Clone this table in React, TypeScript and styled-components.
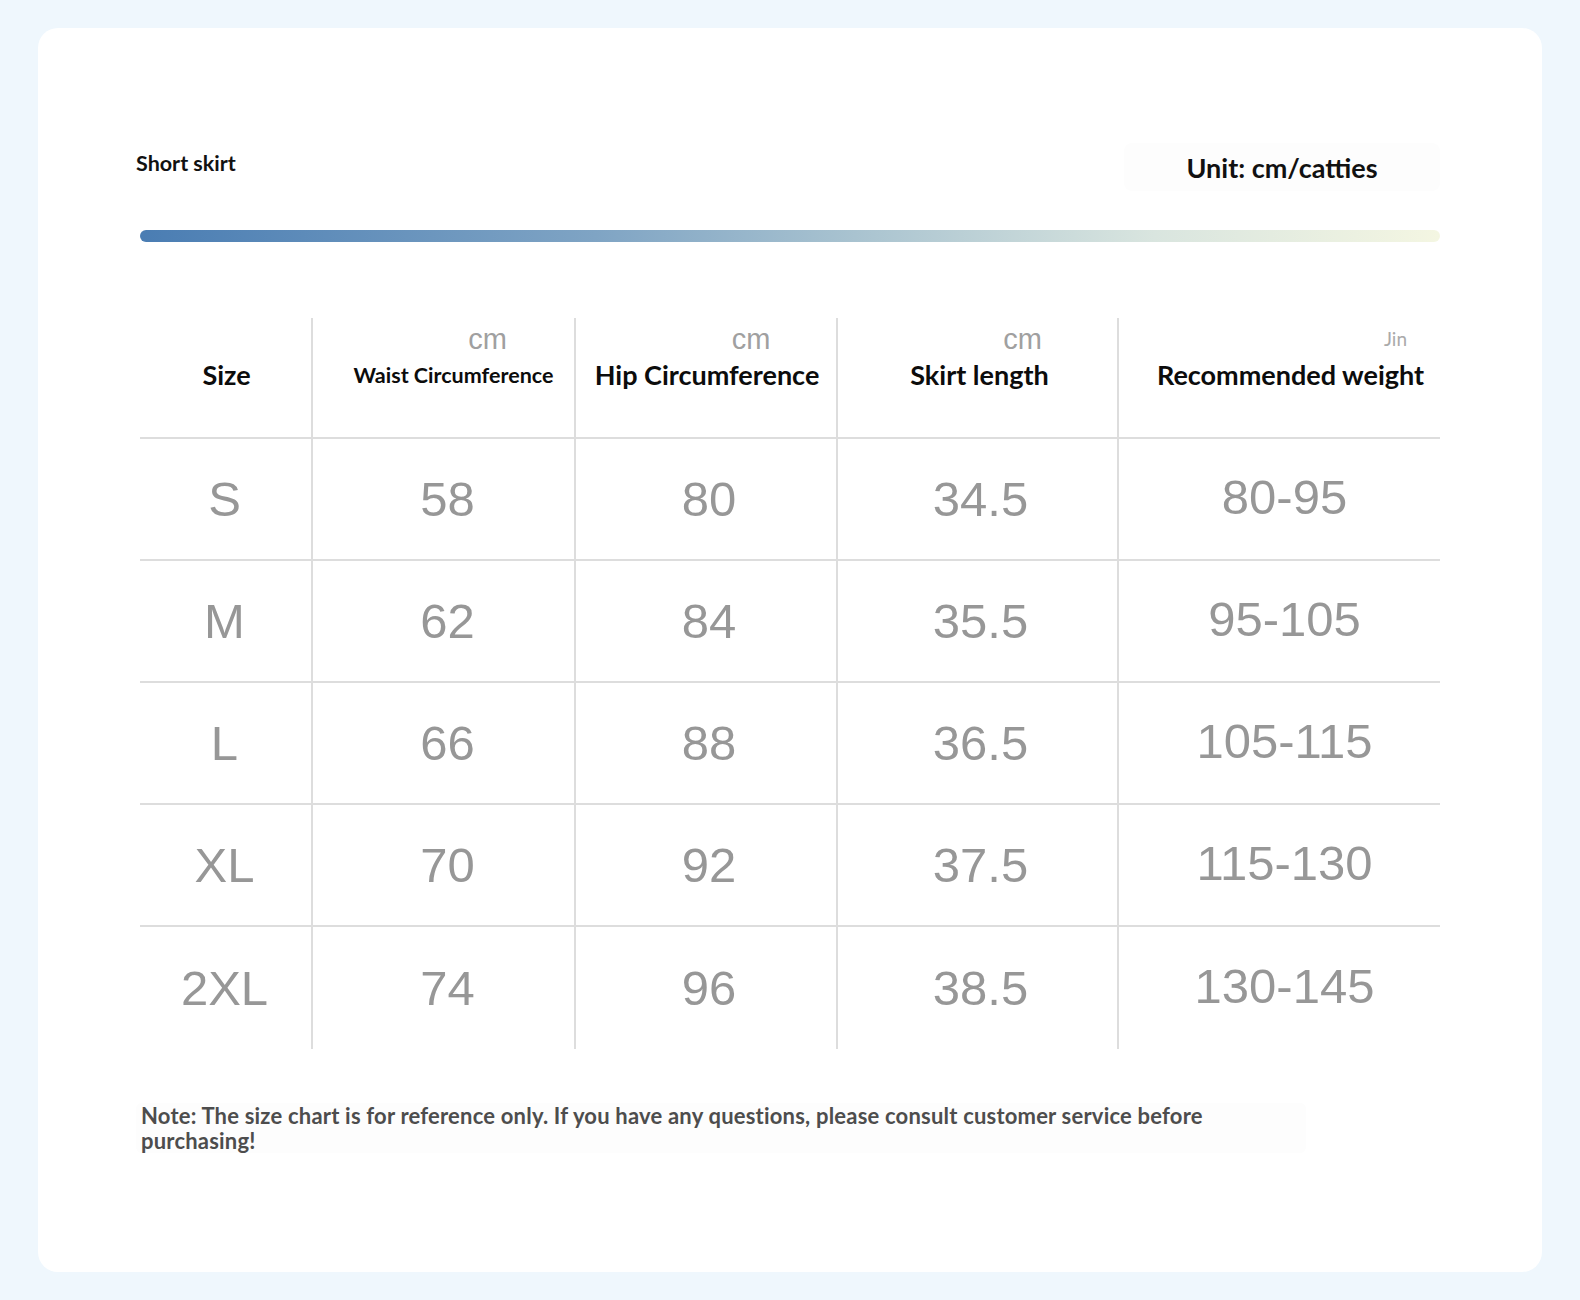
import styled, { createGlobalStyle } from "styled-components";

const GlobalStyle = createGlobalStyle`
  html, body {
    margin: 0;
    padding: 0;
    background: #eff7fd;
  }
  * { box-sizing: border-box; }
`

const LATO = `Lato, "Open Sans", "DejaVu Sans", sans-serif`
const ARIAL = `"Liberation Sans", Arial, sans-serif`
const LINE = '#dddddd'

const Page = styled.div`
  width: 1580px;
  height: 1300px;
  padding: 28px 38px;
`

const Card = styled.div`
  background: #ffffff;
  border-radius: 20px;
  height: 1244px;
  padding: 115px 102px 0 102px;
  display: flex;
  flex-direction: column;
`

const TitleRow = styled.div`
  display: flex;
  justify-content: space-between;
  align-items: center;
  height: 48px;
`

const SubTitle = styled.div`
  font-family: ${LATO};
  font-weight: 700;
  font-size: 21.5px;
  color: #111;
  margin-left: -4px;
  padding-bottom: 8px;
`

const UnitBox = styled.div`
  width: 316px;
  height: 48px;
  display: grid;
  place-items: center;
  border-radius: 8px;
  background: #fdfdfd;
  font-family: ${LATO};
  font-weight: 700;
  font-size: 27px;
  color: #111;
`

const GradientBar = styled.div`
  margin-top: 39px;
  height: 12px;
  border-radius: 6px;
  background: linear-gradient(90deg, #4a7db3 0%, #7fa4c4 35%, #a9c3d0 55%, #d9e5df 78%, #f4f6e2 100%);
`

const Table = styled.div`
  margin-top: 76px;
  display: grid;
  grid-template-columns: 171px 263px 262px 281px 323px;
  grid-template-rows: 121px repeat(5, 122px);
`

const Cell = styled.div<{ $first?: boolean; $last?: boolean }>`
  border-left: ${(p) => (p.$first ? 'none' : `2px solid ${LINE}`)};
  border-bottom: ${(p) => (p.$last ? 'none' : `2px solid ${LINE}`)};
`

const HeadCell = styled(Cell)`
  display: flex;
  flex-direction: column;
  align-items: center;
  padding-top: 6px;
`

const UnitLabel = styled.div<{ $shift: number; $lato?: boolean }>`
  height: 30px;
  line-height: 30px;
  margin-left: ${(p) => p.$shift * 2}px;
  font-family: ${(p) => (p.$lato ? LATO : ARIAL)};
  font-size: ${(p) => (p.$lato ? '19px' : '29px')};
  color: ${(p) => (p.$lato ? '#aaaaaa' : '#a0a0a0')};
`

const HeadName = styled.div<{ $small?: boolean; $shift: number }>`
  margin-top: 6px;
  margin-left: ${(p) => p.$shift * 2}px;
  line-height: 30px;
  font-family: ${LATO};
  font-weight: 700;
  font-size: ${(p) => (p.$small ? '21.5px' : '27px')};
  color: #0c0c0c;
  white-space: nowrap;
`

const DataCell = styled(Cell)<{ $shift: number; $lift?: number }>`
  display: flex;
  align-items: center;
  justify-content: center;
  padding-left: ${(p) => Math.max(p.$shift, 0) * 2}px;
  padding-right: ${(p) => Math.max(-p.$shift, 0) * 2}px;
  padding-bottom: ${(p) => (p.$lift ?? 0) * 2}px;
  font-family: ${ARIAL};
  font-size: 49px;
  color: #979797;
`

const Note = styled.div`
  margin-top: 54px;
  margin-left: -4px;
  width: 1170px;
  padding: 0 5px;
  border-radius: 6px;
  background: #fdfdfd;
  font-family: ${LATO};
  font-weight: 700;
  font-size: 22px;
  letter-spacing: 0.2px;
  line-height: 25px;
  color: #4d4d4d;
`

type Column = {
  name: string
  unit?: string
  unitShift: number
  lato?: boolean
  small?: boolean
  nameShift: number
  dataShift: number
  lift?: number
}

const columns: Column[] = [
  { name: 'Size', unitShift: 0, nameShift: 1, dataShift: -1 },
  { name: 'Waist Circumference', unit: 'cm', unitShift: 44, small: true, nameShift: 10, dataShift: 4 },
  { name: 'Hip Circumference', unit: 'cm', unitShift: 45, nameShift: 1, dataShift: 3 },
  { name: 'Skirt length', unit: 'cm', unitShift: 45, nameShift: 2, dataShift: 3 },
  { name: 'Recommended weight', unit: 'Jin', unitShift: 116, lato: true, nameShift: 11, dataShift: 5, lift: 2 },
]

const rows = [
  ['S', '58', '80', '34.5', '80-95'],
  ['M', '62', '84', '35.5', '95-105'],
  ['L', '66', '88', '36.5', '105-115'],
  ['XL', '70', '92', '37.5', '115-130'],
  ['2XL', '74', '96', '38.5', '130-145'],
]

const App = () => {
  return (
    <Page>
      <GlobalStyle />
      <Card>
        <TitleRow>
          <SubTitle>Short skirt</SubTitle>
          <UnitBox>Unit: cm/catties</UnitBox>
        </TitleRow>
        <GradientBar />
        <Table>
          {columns.map((col, i) => (
            <HeadCell key={col.name} $first={i === 0}>
              <UnitLabel $shift={col.unitShift} $lato={col.lato}>
                {col.unit}
              </UnitLabel>
              <HeadName $small={col.small} $shift={col.nameShift}>
                {col.name}
              </HeadName>
            </HeadCell>
          ))}
          {rows.map((row, r) =>
            row.map((value, c) => (
              <DataCell
                key={`${r}-${c}`}
                $first={c === 0}
                $last={r === rows.length - 1}
                $shift={columns[c].dataShift}
                $lift={columns[c].lift}
              >
                {value}
              </DataCell>
            ))
          )}
        </Table>
        <Note>
          Note: The size chart is for reference only. If you have any questions, please consult customer service before
          <br />
          purchasing!
        </Note>
      </Card>
    </Page>
  );
};

export default App;
